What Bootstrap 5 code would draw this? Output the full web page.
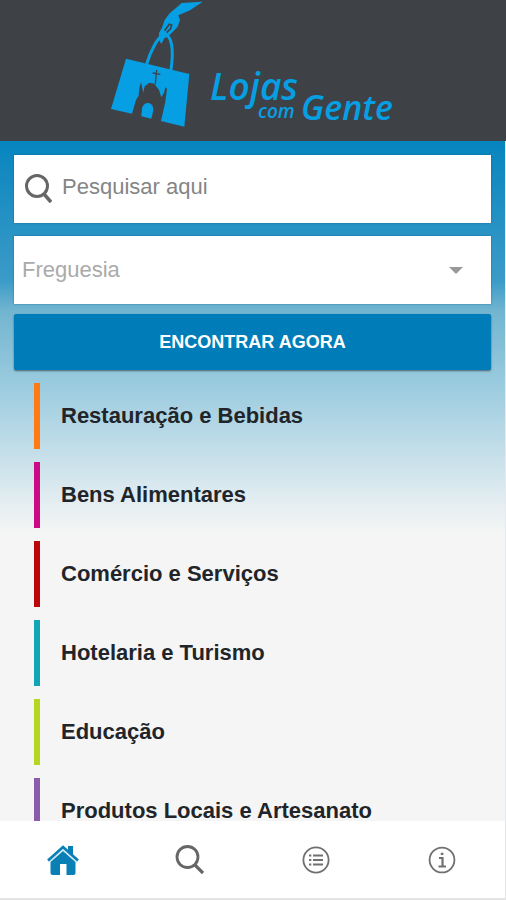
<!DOCTYPE html>
<html lang="pt">
<head>
<meta charset="utf-8">
<meta name="viewport" content="width=device-width, initial-scale=1">
<title>Lojas com Gente</title>
<link href="https://cdn.jsdelivr.net/npm/bootstrap@5.3.0/dist/css/bootstrap.min.css" rel="stylesheet">
<style>
  body { font-family: "Liberation Sans", Arial, sans-serif; background: #f5f5f5; color: #212529; }
  .app-header { background: #3e4246; }
  .brand-art { display: block; width: 290px; height: 141px; }
  .brand-art text { font-family: "Open Sans", "Noto Sans", sans-serif; font-style: italic; font-weight: 600; fill: #069fe3; }
  .app-main { min-height: 0; border-right: 1px solid #e4eaed; background: linear-gradient(#0584be 0, #0f88c0 20px, #3c9bc8 140px, #72b5d0 170px, #98cade 240px, #c3dee9 310px, #e9f0f2 370px, #f5f5f5 395px); }
  .search-form { padding: 14px 14px 0; }
  .field-box { height: 68px; background: #fff; box-shadow: 0 0 2px rgba(0, 70, 100, .45); }
  .field-box .form-control, .field-box .form-select { font-size: 22px; border: 0; border-radius: 0; background-color: transparent; box-shadow: none; height: 100%; }
  .field-box .form-control { padding: 0 8px 4px 6px; color: #555; }
  .field-box .form-control::placeholder { color: #858585; opacity: 1; }
  .field-box .form-select { padding: 0 48px 2px 8px; color: #aaa; background-image: none; }
  .parish-box { margin-top: 13px; }
  .field-caret { position: absolute; right: 28px; top: 31px; pointer-events: none; }
  .find-btn { height: 56px; margin-top: 10px; background: #007db8; color: #fff; border: 0; border-radius: 2px; font-size: 18px; font-weight: 700; box-shadow: 0 1px 2px rgba(0, 0, 0, .5); }
  .find-btn:hover { background: #006fa5; color: #fff; }
  .category-list { gap: 13px; padding: 13px 34px 0; min-height: 0; overflow: hidden; }
  .category-link { height: 66px; flex: none; padding: 0 0 2px 21px; border-left: 6px solid; font-size: 22px; font-weight: 700; }
  .category-link span { color: #212529; }
  .c-orange { border-color: #ff7a12; } .c-pink { border-color: #cc0a85; } .c-red { border-color: #bb0709; }
  .c-teal { border-color: #12a5b5; } .c-lime { border-color: #b5d723; } .c-purple { border-color: #8a5cab; }
  .tab-bar { height: 79px; background: #fff; border-bottom: 2px solid #e4e4e4; border-right: 1px solid #e4e4e4; }
</style>
</head>
<body>
<div class="d-flex flex-column vh-100 overflow-hidden">
  <header class="app-header d-flex justify-content-center">
    <svg class="brand-art" viewBox="108 0 290 141" role="img" aria-label="Lojas com Gente">
      <g transform="translate(90 0) scale(.3333)">
        <path fill="#069fe3" d="M108 176 298 222 283 380 213 363 226 305 231 266 226 262 222 279 214 292 207 270 193 251 178 248 164 259 160 278 153 246 148 264 146 287 138 300 126 341 63 327Z"/>
        <path fill="#069fe3" d="M156 324Q162 307 177 309 193 314 189 336L184 356 154 349Z"/>
        <path fill="none" stroke="#3e4246" stroke-width="4" d="M200 210 196 252M188 219 211 223"/>
        <path fill="none" stroke="#069fe3" stroke-width="9" d="M170 192C181 155 202 112 221 103 248 105 251 153 243 210"/>
        <path fill="#069fe3" d="M338 5 275 9 258 24 239 40 224 60 216 83 207 99 207 119 214 132 223 115 235 109 248 96 263 80 270 59 265 46 300 31Z"/>
        <path fill="none" stroke="#3e4246" stroke-width="5" d="M224 92 238 73 245 75 242 86 230 98"/>
      </g>
      <text x="210" y="100" font-size="37">Lojas</text>
      <text x="258" y="118" font-size="19">com</text>
      <text x="301" y="120" font-size="34">Gente</text>
    </svg>
  </header>

  <main class="app-main flex-grow-1 d-flex flex-column">
    <form class="search-form d-flex flex-column" onsubmit="return false">
      <div class="field-box d-flex align-items-center ps-2">
        <label for="query" class="flex-shrink-0 pe-1" aria-label="Pesquisar">
          <svg width="30" height="30" viewBox="-2 0 30 30" fill="none" stroke="#666" stroke-width="3"><circle cx="13" cy="12" r="10.5"/><path d="M20 20 27 28" stroke-width="3.5"/></svg>
        </label>
        <input id="query" type="text" class="form-control" placeholder="Pesquisar aqui">
      </div>
      <div class="field-box parish-box position-relative">
        <select id="parish" class="form-select" aria-label="Freguesia"><option>Freguesia</option></select>
        <svg class="field-caret" width="14" height="7" viewBox="0 0 14 7" aria-hidden="true"><path fill="#999" d="M0 0H14L7 7Z"/></svg>
      </div>
      <button type="submit" class="btn find-btn w-100">ENCONTRAR AGORA</button>
    </form>

    <nav class="category-list d-flex flex-column" aria-label="Categorias">
      <a href="#" class="category-link c-orange d-flex align-items-center text-decoration-none"><span>Restauração e Bebidas</span></a>
      <a href="#" class="category-link c-pink d-flex align-items-center text-decoration-none"><span>Bens Alimentares</span></a>
      <a href="#" class="category-link c-red d-flex align-items-center text-decoration-none"><span>Comércio e Serviços</span></a>
      <a href="#" class="category-link c-teal d-flex align-items-center text-decoration-none"><span>Hotelaria e Turismo</span></a>
      <a href="#" class="category-link c-lime d-flex align-items-center text-decoration-none"><span>Educação</span></a>
      <a href="#" class="category-link c-purple d-flex align-items-center text-decoration-none"><span>Produtos Locais e Artesanato</span></a>
    </nav>
  </main>

  <nav class="tab-bar nav nav-fill flex-nowrap flex-shrink-0 align-items-center" aria-label="Principal">
    <a href="#" class="nav-item d-flex justify-content-center w-25" aria-label="Início" aria-current="page">
      <svg width="32" height="32" viewBox="0 0 32 32"><path fill="#087fb5" d="M21 2H26V13L21 8ZM3.5 18 16 7 28.5 18V29Q28.5 31 26.5 31H19.5V20H13V31H5.5Q3.5 31 3.5 29Z"/><path fill="none" stroke="#cfe6f2" stroke-width="1.5" d="M2 18 16 5.5 30 18"/><path fill="none" stroke="#087fb5" stroke-width="2.6" d="M1 16.5 16 3 31 16.5"/></svg>
    </a>
    <a href="#" class="nav-item d-flex justify-content-center w-25" aria-label="Pesquisar">
      <svg width="29" height="30" viewBox="0 0 29 30" fill="none" stroke="#666" stroke-width="2.8"><circle cx="12.5" cy="12" r="10.5"/><path d="M20 20 28 28" stroke-width="3.2"/></svg>
    </a>
    <a href="#" class="nav-item d-flex justify-content-center w-25" aria-label="Lista">
      <svg width="28" height="28" viewBox="0 0 28 28" fill="none" stroke="#707070"><circle cx="14" cy="14" r="12.6" stroke-width="1.8"/><path stroke-width="1.9" d="M7 9.5H9.3M11 9.5H21M7 14H9.3M11 14H21M7 18.5H9.3M11 18.5H21"/></svg>
    </a>
    <a href="#" class="nav-item d-flex justify-content-center w-25" aria-label="Informação">
      <svg width="28" height="28" viewBox="0 0 28 28" fill="none" stroke="#707070"><circle cx="14" cy="14" r="12.4" stroke-width="1.8"/><path stroke-width="2.2" d="M11 12H14.5V20M10.5 20.5H18M12.8 7.8H15.4"/></svg>
    </a>
  </nav>
</div>
<script src="https://cdn.jsdelivr.net/npm/bootstrap@5.3.0/dist/js/bootstrap.bundle.min.js"></script>
</body>
</html>
